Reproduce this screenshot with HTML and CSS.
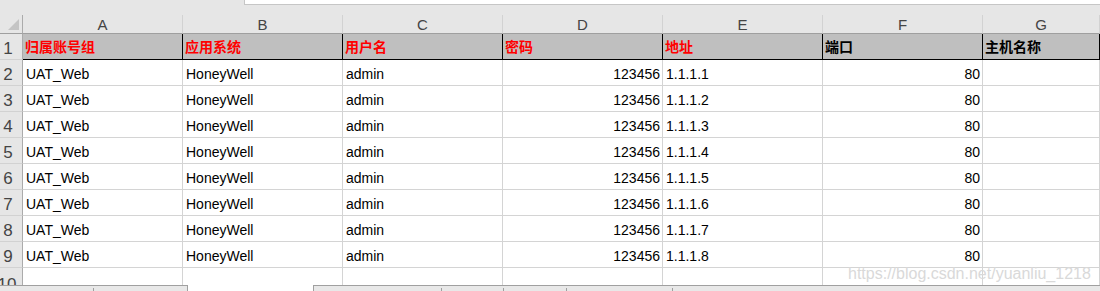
FILE: index.html
```html
<!DOCTYPE html>
<html lang="zh-CN">
<head>
    <meta charset="UTF-8">
    <title>Sheet1</title>
    <link rel="stylesheet" href="styles.css">
</head>
<body>
    <div class="sheet">
        <div class="topbar">
            <div class="spacer"></div>
            <div class="formula"></div>
        </div>

        <div class="grid">
            <div class="corner"><span class="tri"></span></div>
            <div class="colhead">A</div>
            <div class="colhead">B</div>
            <div class="colhead">C</div>
            <div class="colhead">D</div>
            <div class="colhead">E</div>
            <div class="colhead">F</div>
            <div class="colhead">G</div>

            <div class="rowhead">1</div>
            <div class="cell title red">归属账号组</div>
            <div class="cell title red">应用系统</div>
            <div class="cell title red">用户名</div>
            <div class="cell title red">密码</div>
            <div class="cell title red">地址</div>
            <div class="cell title">端口</div>
            <div class="cell title">主机名称</div>

            <div class="rowhead">2</div>
            <div class="cell">UAT_Web</div><div class="cell">HoneyWell</div><div class="cell">admin</div>
            <div class="cell num">123456</div><div class="cell">1.1.1.1</div><div class="cell num">80</div><div class="cell"></div>

            <div class="rowhead">3</div>
            <div class="cell">UAT_Web</div><div class="cell">HoneyWell</div><div class="cell">admin</div>
            <div class="cell num">123456</div><div class="cell">1.1.1.2</div><div class="cell num">80</div><div class="cell"></div>

            <div class="rowhead">4</div>
            <div class="cell">UAT_Web</div><div class="cell">HoneyWell</div><div class="cell">admin</div>
            <div class="cell num">123456</div><div class="cell">1.1.1.3</div><div class="cell num">80</div><div class="cell"></div>

            <div class="rowhead">5</div>
            <div class="cell">UAT_Web</div><div class="cell">HoneyWell</div><div class="cell">admin</div>
            <div class="cell num">123456</div><div class="cell">1.1.1.4</div><div class="cell num">80</div><div class="cell"></div>

            <div class="rowhead">6</div>
            <div class="cell">UAT_Web</div><div class="cell">HoneyWell</div><div class="cell">admin</div>
            <div class="cell num">123456</div><div class="cell">1.1.1.5</div><div class="cell num">80</div><div class="cell"></div>

            <div class="rowhead">7</div>
            <div class="cell">UAT_Web</div><div class="cell">HoneyWell</div><div class="cell">admin</div>
            <div class="cell num">123456</div><div class="cell">1.1.1.6</div><div class="cell num">80</div><div class="cell"></div>

            <div class="rowhead">8</div>
            <div class="cell">UAT_Web</div><div class="cell">HoneyWell</div><div class="cell">admin</div>
            <div class="cell num">123456</div><div class="cell">1.1.1.7</div><div class="cell num">80</div><div class="cell"></div>

            <div class="rowhead">9</div>
            <div class="cell">UAT_Web</div><div class="cell">HoneyWell</div><div class="cell">admin</div>
            <div class="cell num">123456</div><div class="cell">1.1.1.8</div><div class="cell num">80</div><div class="cell"></div>

            <div class="rowhead last">10</div>
            <div class="cell last"></div><div class="cell last"></div><div class="cell last"></div>
            <div class="cell last"></div><div class="cell last"></div><div class="cell last"></div><div class="cell last"></div>
        </div>

        <div class="tabs">
            <div class="seg first"><span class="half"></span><span class="half"></span></div>
            <div class="active"></div>
            <div class="rest">
                <div class="seg w128"></div>
                <div class="seg w62"></div>
                <div class="seg w63"></div>
                <div class="seg w106"></div>
                <div class="fill"></div>
            </div>
        </div>

        <div class="watermark">https://blog.csdn.net/yuanliu_1218</div>
    </div>
</body>
</html>
```

FILE: styles.css
```css
* {
    margin: 0;
    padding: 0;
    box-sizing: border-box;
}

body {
    background-color: #e6e6e6;
    font-family: "Liberation Sans", Arial, sans-serif;
    overflow: hidden;
}

.sheet {
    position: relative;
    width: 1100px;
    height: 291px;
}

/* formula bar remnant */
.topbar {
    display: flex;
    height: 15px;
}

.topbar .spacer {
    width: 244px;
}

.topbar .formula {
    flex: 1;
    height: 5px;
    background-color: #fff;
    border-left: 1px solid #c6c6c6;
    border-bottom: 1px solid #c6c6c6;
}

.grid {
    display: grid;
    grid-template-columns: 23px repeat(6, 160px) 117px;
    grid-template-rows: 19px repeat(9, 26px) 17px;
}

.corner,
.colhead {
    background-color: #e6e6e6;
    border-right: 1px solid #d2d2d2;
    border-bottom: 1px solid #9f9f9f;
}

.corner {
    border-right-color: #ababab;
    position: relative;
}

.corner .tri {
    position: absolute;
    right: 3px;
    bottom: 3px;
    width: 0;
    height: 0;
    border-left: 11px solid transparent;
    border-bottom: 11px solid #c4c4c4;
}

.colhead {
    font-size: 15px;
    line-height: 16px;
    padding-top: 2px;
    text-align: center;
    color: #444;
}

.rowhead {
    background-color: #e6e6e6;
    border-right: 1px solid #ababab;
    border-bottom: 1px solid #d2d2d2;
    font-size: 17px;
    line-height: 16px;
    color: #444;
    text-align: center;
    padding-right: 6px;
    display: flex;
    align-items: flex-end;
    justify-content: center;
    padding-bottom: 2px;
}

.rowhead.last {
    border-bottom: none;
    align-items: flex-start;
    padding-top: 9px;
    padding-right: 8px;
}

.cell {
    background-color: #fff;
    border-right: 1px solid #d4d4d4;
    border-bottom: 1px solid #d4d4d4;
    font-size: 14px;
    line-height: 24px;
    padding: 2px 2px 0 3px;
    color: #000;
    white-space: nowrap;
    overflow: hidden;
}

.cell.num {
    text-align: right;
    padding-right: 2px;
}

.cell.last {
    border-bottom: none;
}

.cell.title {
    background-color: #bfbfbf;
    border-right: 1px solid #000;
    border-bottom: 1px solid #000;
    font-family: "Liberation Sans", "Noto Sans CJK SC", sans-serif;
    font-weight: 700;
    font-size: 14px;
    line-height: 25px;
    padding: 1px 2px 0;
}

.cell.red {
    color: #f00;
}

/* sheet tabs / scroll bar strip */
.tabs {
    display: flex;
    height: 6px;
}

.tabs .first {
    width: 188px;
    border-top: 1px solid #a0a0a0;
    border-right: 1px solid #a0a0a0;
    background-color: #e8e8e8;
    display: flex;
}

.tabs .first .half {
    width: 95px;
    height: 100%;
    display: flex;
}

.tabs .first .half:first-child::after {
    content: '';
    margin-left: auto;
    align-self: flex-end;
    width: 1px;
    height: 3px;
    background-color: #9f9f9f;
}

.tabs .active {
    width: 125px;
    background-color: #fff;
}

.tabs .rest {
    flex: 1;
    display: flex;
    border-top: 1px solid #a0a0a0;
    border-left: 1px solid #a0a0a0;
    background-color: #e8e8e8;
}

.tabs .seg {
    display: flex;
}

.tabs .rest .seg::after {
    content: '';
    margin-left: auto;
    align-self: flex-end;
    width: 1px;
    height: 3px;
    background-color: #9f9f9f;
}

.tabs .w128 { width: 128px; }
.tabs .w62 { width: 62px; }
.tabs .w63 { width: 63px; }
.tabs .w106 { width: 106px; }

.tabs .fill {
    flex: 1;
}

.watermark {
    position: absolute;
    left: 848px;
    top: 265px;
    font-size: 16px;
    color: #d9d9d9;
    white-space: nowrap;
}
```
